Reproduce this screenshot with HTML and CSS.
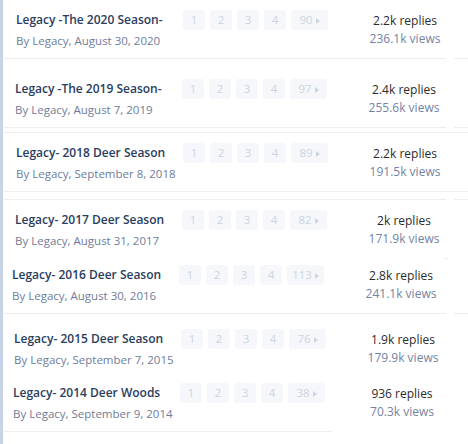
FILE: index.html
```html
<!DOCTYPE html>
<html lang="en">
<head>
    <meta charset="UTF-8">
    <title>Legacy topics</title>
    <link rel="stylesheet" href="styles.css">
</head>
<body>
    <div class="page">
        <div class="strip"></div>
        <div class="list">

            <!-- 2020 -->
            <div class="topic t1">
                <div class="row">
                    <div class="info">
                        <a class="title" href="#">Legacy -The 2020 Season-</a>
                        <div class="meta">By Legacy, August 30, 2020</div>
                    </div>
                    <ul class="pager">
                        <li>1</li><li>2</li><li>3</li><li>4</li><li class="last">90<span class="arrow"></span></li>
                    </ul>
                    <div class="stats">
                        <div class="replies">2.2k replies</div>
                        <div class="views">236.1k views</div>
                    </div>
                </div>
                <div class="rule"><span class="main"></span><span class="tail"></span></div>
            </div>

            <!-- 2019 -->
            <div class="topic t2">
                <div class="row">
                    <div class="info">
                        <a class="title" href="#">Legacy -The 2019 Season-</a>
                        <div class="meta">By Legacy, August 7, 2019</div>
                    </div>
                    <ul class="pager">
                        <li>1</li><li>2</li><li>3</li><li>4</li><li class="last">97<span class="arrow"></span></li>
                    </ul>
                    <div class="stats">
                        <div class="replies">2.4k replies</div>
                        <div class="views">255.6k views</div>
                    </div>
                </div>
                <div class="rule"><span class="main"></span><span class="tail"></span></div>
                <div class="rule full"><span class="main"></span></div>
            </div>

            <!-- 2018 -->
            <div class="topic t3">
                <div class="row">
                    <div class="info">
                        <a class="title" href="#">Legacy- 2018 Deer Season</a>
                        <div class="meta">By Legacy, September 8, 2018</div>
                    </div>
                    <ul class="pager">
                        <li>1</li><li>2</li><li>3</li><li>4</li><li class="last">89<span class="arrow"></span></li>
                    </ul>
                    <div class="stats">
                        <div class="replies">2.2k replies</div>
                        <div class="views">191.5k views</div>
                    </div>
                </div>
                <div class="rule full"><span class="main"></span></div>
                <div class="rule second"><span class="main"></span><span class="tail"></span></div>
            </div>

            <!-- 2017 -->
            <div class="topic t4">
                <div class="row">
                    <div class="info">
                        <a class="title" href="#">Legacy- 2017 Deer Season</a>
                        <div class="meta">By Legacy, August 31, 2017</div>
                    </div>
                    <ul class="pager">
                        <li>1</li><li>2</li><li>3</li><li>4</li><li class="last">82<span class="arrow"></span></li>
                    </ul>
                    <div class="stats">
                        <div class="replies">2k replies</div>
                        <div class="views">171.9k views</div>
                    </div>
                </div>
                <div class="rule stub"><span class="bit"></span></div>
            </div>

            <!-- 2016 -->
            <div class="topic t5">
                <div class="row">
                    <div class="info">
                        <a class="title" href="#">Legacy- 2016 Deer Season</a>
                        <div class="meta">By Legacy, August 30, 2016</div>
                    </div>
                    <ul class="pager">
                        <li>1</li><li>2</li><li>3</li><li>4</li><li class="last">113<span class="arrow"></span></li>
                    </ul>
                    <div class="stats">
                        <div class="replies">2.8k replies</div>
                        <div class="views">241.1k views</div>
                    </div>
                </div>
                <div class="rule"><span class="main"></span><span class="tail"></span></div>
            </div>

            <!-- 2015 -->
            <div class="topic t6">
                <div class="row">
                    <div class="info">
                        <a class="title" href="#">Legacy- 2015 Deer Season</a>
                        <div class="meta">By Legacy, September 7, 2015</div>
                    </div>
                    <ul class="pager">
                        <li>1</li><li>2</li><li>3</li><li>4</li><li class="last">76<span class="arrow"></span></li>
                    </ul>
                    <div class="stats">
                        <div class="replies">1.9k replies</div>
                        <div class="views">179.9k views</div>
                    </div>
                </div>
            </div>

            <!-- 2014 -->
            <div class="topic t7">
                <div class="row">
                    <div class="info">
                        <a class="title" href="#">Legacy- 2014 Deer Woods</a>
                        <div class="meta">By Legacy, September 9, 2014</div>
                    </div>
                    <ul class="pager">
                        <li>1</li><li>2</li><li>3</li><li>4</li><li class="last">38<span class="arrow"></span></li>
                    </ul>
                    <div class="stats">
                        <div class="replies">936 replies</div>
                        <div class="views">70.3k views</div>
                    </div>
                </div>
                <div class="rule short"><span class="main"></span></div>
            </div>

        </div>
    </div>
</body>
</html>
```

FILE: styles.css
```css
body {
    margin: 0;
    padding: 0;
    background: #fff;
    font-family: "Open Sans", "Noto Sans", sans-serif;
}

.page {
    display: flex;
    min-height: 444px;
}

/* franja azul de la izquierda */
.strip {
    width: 3px;
    background: #c9d3e7;
    flex-shrink: 0;
}

.list {
    flex: 1;
    margin-left: 1px;
}

.row {
    display: flex;
    align-items: flex-start;
    height: 48px;
}

.info {
    width: 167px;
    flex-shrink: 0;
}

.title {
    display: block;
    font-size: 12px;
    font-weight: 600;
    line-height: 20px;
    color: #293d5e;
    text-decoration: none;
    white-space: nowrap;
}

.meta {
    margin-top: 2px;
    font-size: 11.5px;
    line-height: 18px;
    color: #6f7c99;
    white-space: nowrap;
}

.pager {
    display: flex;
    gap: 5px;
    margin: 0;
    padding: 0;
    list-style: none;
}

.pager li {
    width: 22px;
    height: 20px;
    border-radius: 3px;
    background: #f5f7fa;
    color: #ccd5e1;
    font-size: 11.5px;
    line-height: 20px;
    text-align: center;
}

.pager li.last {
    width: 37px;
}

.arrow {
    display: inline-block;
    margin-left: 3px;
    border-left: 4px solid #ccd5e1;
    border-top: 3px solid transparent;
    border-bottom: 3px solid transparent;
    vertical-align: 0;
}

.stats {
    width: 100px;
    margin-left: 27px;
    padding-top: 2px;
    text-align: center;
    font-size: 12px;
    line-height: 18px;
    white-space: nowrap;
}

.replies {
    color: #2b2b2b;
}

.views {
    color: #7483a4;
}

/* separadores */
.rule {
    display: flex;
    height: 1px;
}

.rule .main {
    width: 442px;
    background: #ebeef3;
}

.rule .tail {
    margin-left: 8px;
    flex: 1;
    background: #ebeef3;
}

.rule.full .main {
    flex: 1;
}

.rule.short .main {
    width: 328px;
}

.rule.stub .bit {
    margin-left: 439px;
    width: 6px;
    background: #eef0f4;
}

/* desplazamientos de cada recorte */
.t1 { padding-top: 10px; }
.t1 .row { margin-left: 12px; }

.t2 { margin-top: 20px; }
.t2 .row { margin-left: 11px; }
.t2 .rule.full { margin-top: 4px; }

.t3 { margin-top: 10px; }
.t3 .row { margin-left: 12px; }
.t3 .rule.second { margin-top: 7px; }

.t4 { margin-top: 10px; }
.t4 .row { margin-left: 11px; }

.t5 { margin-top: 6px; }
.t5 .row { margin-left: 8px; }

.t6 { margin-top: 15px; }
.t6 .row { margin-left: 10px; }

.t7 { margin-top: 6px; }
.t7 .row { margin-left: 9px; }
```
